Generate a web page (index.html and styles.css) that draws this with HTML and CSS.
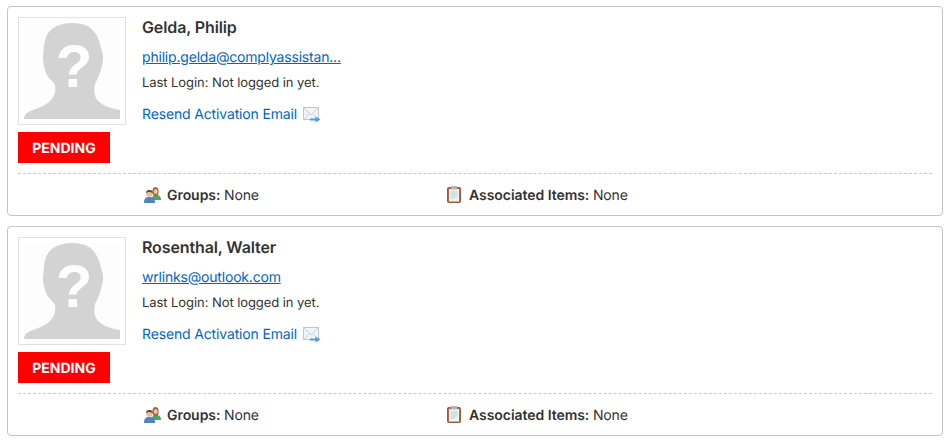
FILE: index.html
```html
<!DOCTYPE html>
<html lang="en">
<head>
<meta charset="utf-8">
<title>Users</title>
<link rel="stylesheet" href="styles.css">
</head>
<body>
<svg class="defs" width="0" height="0" aria-hidden="true">
  <defs>
    <symbol id="avatar" viewBox="0 0 96 96">
      <rect width="96" height="96" fill="#fdfdfd"/>
      <path d="M48 0C37 0 27 4 23 12C19 20 20 28 19 35C19 42 21 47 23 52C26 57 29 58 31 62C32 68 31 72 27 77C21 84 9 86 3 90C1 91 0 94 0 96H96V87C85 85 76 82 72 75C70 71 70 66 71 61C74 55 77 49 78 42C80 36 79 30 77 25C75 15 71 8 65 4C60 1 54 0 48 0Z" fill="#d3d3d3"/>
      <text x="50" y="64" class="avatar-mark">?</text>
    </symbol>
    <symbol id="mail" viewBox="0 0 18 16">
      <rect x="0.5" y="0.5" width="15" height="12" fill="#f0f4f8" stroke="#bcc8d4"/>
      <path d="M1 1L8 8L15 1M1 12L6 7M15 12L10 7" fill="none" stroke="#c6d2dc"/>
      <path d="M7 11.500H12.500V9.500L17.500 12.500L12.500 15.500V13.500H7Z" fill="#4b9fdc"/>
    </symbol>
    <symbol id="people" viewBox="0 0 17 16">
      <path d="M8 13C8 9 9 8 12 8C15 8 17 9 17 13Z" fill="#4aa66b"/>
      <path d="M8.500 6C8 2 9.500 0 11.500 0C14 0 15 2 14.500 6C14.500 8 13.500 9 11.700 9C10 9 9 8 8.500 6Z" fill="#a9603c"/>
      <ellipse cx="11.700" cy="4.500" rx="1.900" ry="2.500" fill="#f0c8a5"/>
      <path d="M0 16C0 11 2 10 5.500 10C9 10 11 11 11 16Z" fill="#4d86c0"/>
      <circle cx="5.500" cy="6.500" r="3.300" fill="#eebd97"/>
      <path d="M2.200 6.500C2 3.500 3.500 3 5.500 3C7.500 3 9 3.800 8.800 6.500C8 5.200 6 5 5 5C4 5 3 5.300 2.200 6.500Z" fill="#5a4636"/>
    </symbol>
    <symbol id="clipboard" viewBox="0 0 14 17">
      <rect x="0.500" y="1.500" width="13" height="15" rx="1" fill="#b0674a" stroke="#9a5a40"/>
      <rect x="2" y="3" width="10" height="12.500" fill="#edf5f2"/>
      <path d="M3.500 6H10.500M3.500 8H10.500M3.500 10H10.500M3.500 12H8" stroke="#b5d3cd"/>
      <rect x="4" y="0" width="6" height="3.500" fill="#b5b5b5"/>
    </symbol>
  </defs>
</svg>

<main class="list">
  <article class="card">
    <div class="card-top">
      <div class="side">
        <div class="photo"><svg class="photo-img" role="img" aria-label="No photo"><use href="#avatar"/></svg></div>
        <div class="status">PENDING</div>
      </div>
      <div class="info">
        <h2 class="name">Gelda, Philip</h2>
        <a class="email" href="#">philip.gelda@complyassistan...</a>
        <p class="login">Last Login: Not logged in yet.</p>
        <a class="resend" href="#">Resend Activation Email <svg class="icon-mail"><use href="#mail"/></svg></a>
      </div>
    </div>
    <div class="card-foot">
      <div class="meta meta-groups"><svg class="icon-people"><use href="#people"/></svg><span><b>Groups:</b> None</span></div>
      <div class="meta meta-items"><svg class="icon-clip"><use href="#clipboard"/></svg><span><b>Associated Items:</b> None</span></div>
    </div>
  </article>

  <article class="card">
    <div class="card-top">
      <div class="side">
        <div class="photo"><svg class="photo-img" role="img" aria-label="No photo"><use href="#avatar"/></svg></div>
        <div class="status">PENDING</div>
      </div>
      <div class="info">
        <h2 class="name">Rosenthal, Walter</h2>
        <a class="email" href="#">wrlinks@outlook.com</a>
        <p class="login">Last Login: Not logged in yet.</p>
        <a class="resend" href="#">Resend Activation Email <svg class="icon-mail"><use href="#mail"/></svg></a>
      </div>
    </div>
    <div class="card-foot">
      <div class="meta meta-groups"><svg class="icon-people"><use href="#people"/></svg><span><b>Groups:</b> None</span></div>
      <div class="meta meta-items"><svg class="icon-clip"><use href="#clipboard"/></svg><span><b>Associated Items:</b> None</span></div>
    </div>
  </article>
</main>
</body>
</html>
```

FILE: styles.css
```css
* {
  box-sizing: border-box;
}

html,
body {
  margin: 0;
  background: #fff;
}

body {
  font-family: Inter, "Liberation Sans", sans-serif;
  font-size: 14px;
  color: #333;
  overflow: hidden;
  text-rendering: geometricPrecision;
}

.defs {
  position: absolute;
}

.avatar-mark {
  font-family: "Liberation Sans", sans-serif;
  font-size: 60px;
  font-weight: 700;
  fill: #fdfdfd;
  text-anchor: middle;
}

.list {
  display: flex;
  flex-direction: column;
  gap: 10px;
  padding: 6px 9px 0 7px;
}

.card {
  height: 210px;
  border: 1px solid #c4c4c4;
  border-radius: 4px;
  padding: 10px 10px 0;
}

.card-top {
  display: flex;
  gap: 16px;
  height: 157px;
  border-bottom: 1px dashed #c8c8c8;
}

.side {
  width: 108px;
  flex: none;
}

.photo {
  width: 108px;
  height: 108px;
  border: 1px solid #e2e2e2;
  padding: 5px;
}

.photo-img {
  display: block;
  width: 96px;
  height: 96px;
}

.status {
  width: 92px;
  height: 31px;
  margin-top: 7px;
  background: #f00;
  color: #fff;
  font-size: 14px;
  font-weight: 700;
  line-height: 33px;
  text-align: center;
}

.info {
  display: flex;
  flex-direction: column;
  align-items: flex-start;
}

.name {
  margin: 0;
  font-size: 16px;
  font-weight: 600;
  line-height: 20px;
  letter-spacing: -0.12px;
}

.email {
  display: block;
  margin-top: 11px;
  color: #0066c0;
  font-size: 14px;
  line-height: 20px;
  letter-spacing: -0.19px;
  text-decoration: underline;
  white-space: nowrap;
}

.login {
  margin: 5px 0 0;
  font-size: 13px;
  line-height: 20px;
  letter-spacing: -0.07px;
}

.resend {
  display: flex;
  align-items: center;
  gap: 6px;
  margin-top: 12px;
  color: #0066c0;
  font-size: 14px;
  line-height: 20px;
  letter-spacing: -0.15px;
  text-decoration: none;
}

.icon-mail {
  width: 18px;
  height: 16px;
}

.card-foot {
  display: flex;
  height: 44px;
  padding-left: 126px;
  align-items: center;
  letter-spacing: -0.2px;
}

.meta {
  display: flex;
  align-items: center;
  line-height: 20px;
}

.meta b {
  font-weight: 600;
  letter-spacing: -0.05px;
}

.meta-groups {
  width: 302px;
  gap: 6px;
}

.meta-items {
  gap: 8px;
}

.icon-people {
  width: 17px;
  height: 16px;
  margin-top: -3px;
}

.icon-clip {
  width: 14px;
  height: 17px;
  margin-top: -3px;
  margin-left: 1px;
}
```
